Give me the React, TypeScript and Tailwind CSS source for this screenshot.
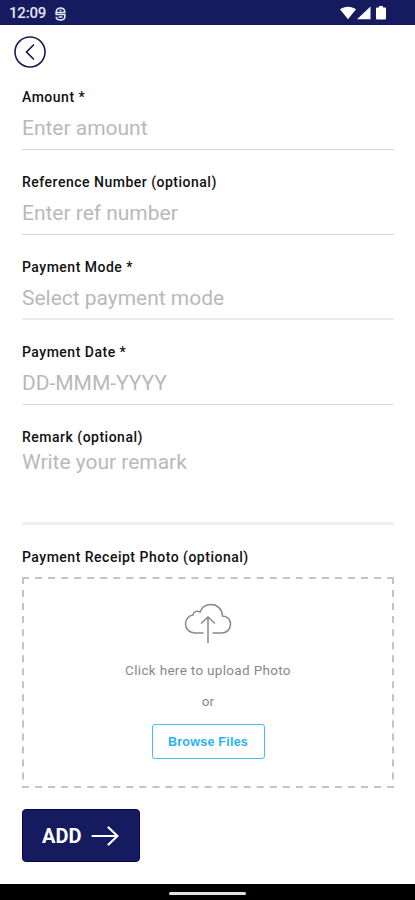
type FieldProps = { label: string; placeholder: string; line: string };

function Field({ label, placeholder, line }: FieldProps) {
  return (
    <div className="h-[85px]">
      <div className="h-4 text-[14px] leading-4 font-medium tracking-[0.5px] whitespace-nowrap text-[#111]">{label}</div>
      <div className={`flex h-[45px] items-center pt-1 text-[21px] tracking-[-0.02px] text-[#b9b9b9] ${line}`}>
        {placeholder}
      </div>
    </div>
  );
}

function StatusBar() {
  return (
    <div className="flex h-[25px] items-center justify-between bg-[#151b5e] pr-[26px] pl-[9px] text-[#e4e6f3]">
      <div className="flex items-center gap-[9px] pt-0.5">
        <span className="text-[15px] leading-[23px] font-medium tracking-[-0.2px]">12:09</span>
        <svg width="11" height="14" viewBox="0 0 11 14" fill="none" stroke="currentColor" strokeWidth="1.6">
          <path d="M1.200 5.500C1.200 2.500 3 1 5.500 1s4.300 1.500 4.300 4.500Z" />
          <path d="M1.200 5.500V7.500H9.800V9.700C9.800 12 8 13 5.500 13S1.200 12 1.200 9.700M3.500 10h4M5.500 2.500v2" />
        </svg>
      </div>
      <svg width="50" height="16" viewBox="0 0 50 16" fill="#fff">
        <path d="M1 4.300C5.500.8 12.500.8 17 4.300L9 14.300Z" />
        <path d="M31.500 1.500v12.800H18Z" />
        <path d="M38 2.500h2V1h4v1.500h2q1 0 1 1v10q0 1-1 1h-8q-1 0-1-1v-10q0-1 1-1Z" />
      </svg>
    </div>
  );
}

export default function App() {
  return (
    <div className="flex h-[900px] w-[415px] flex-col overflow-hidden bg-white font-[Roboto,sans-serif]">
      <StatusBar />
      <header className="flex h-[64px] shrink-0 items-start pt-[11px] pl-[14px]">
        <svg width="32" height="32" viewBox="0 0 32 32" fill="none" stroke="#1d1a55" strokeWidth="1.600">
          <circle cx="16" cy="16" r="15" />
          <path d="M19.500 9l-7 7 7 7" strokeLinecap="round" strokeWidth="1.700" />
        </svg>
      </header>
      <main className="flex flex-1 flex-col pr-[21px] pl-[22px]">
        <Field label="Amount *" placeholder="Enter amount" line="border-b border-[#d8d8d8]" />
        <Field label="Reference Number (optional)" placeholder="Enter ref number" line="border-b border-[#d8d8d8]" />
        <Field label="Payment Mode *" placeholder="Select payment mode" line="border-b-2 border-[#ececec]" />
        <Field label="Payment Date *" placeholder="DD-MMM-YYYY" line="border-b border-[#d8d8d8]" />
        <div className="h-[120px]">
          <div className="h-4 text-[14px] leading-4 font-medium tracking-[0.5px] text-[#111]">Remark (optional)</div>
          <div className="h-[80px] border-b-[3px] border-[#efefef] pt-[5px] text-[21px] leading-6 tracking-[-0.02px] text-[#b9b9b9]">
            Write your remark
          </div>
        </div>
        <div className="h-7 text-[14px] leading-4 font-medium tracking-[0.5px] text-[#111]">
          Payment Receipt Photo (optional)
        </div>
        <section className="relative flex h-[211px] flex-col items-center pt-[26px]">
          <svg className="absolute inset-0" width="372" height="211" fill="none" stroke="#c4c4c4" strokeWidth="2">
            <path d="M0 1H372M0 210H372M1 0V211M371 0V211" strokeDasharray="7 6.040" />
          </svg>
          <svg width="48" height="42" viewBox="0 0 48 42" fill="none" stroke="#858a90" strokeWidth="1.500">
            <path d="M19.500 30H11C5.500 30 1.500 26 1.500 21C1.500 16 5 12.500 9 12C9 9 13 7 16 9C18 4 22 1.500 27 1.500C33.500 1.500 38 6 38.500 13C43 13 46.500 16.500 46.500 21C46.500 26 43 30 38 30H28.500" />
            <path d="M24 40V14M17 20.500L24 14L31 20.500" />
          </svg>
          <div className="mt-[17px] text-[13.5px] leading-4 tracking-[0.32px] text-[#858a90]">Click here to upload Photo</div>
          <div className="mt-[15px] text-[13.5px] leading-4 text-[#858a90]">or</div>
          <button className="mt-[15px] h-[35px] w-[113px] rounded-[3px] border border-[#45bdf5] pt-px text-[12.5px] font-bold tracking-[0.25px] text-[#27b3f3] font-['Liberation_Sans',sans-serif]">
            Browse Files
          </button>
        </section>
        <button className="mt-[21px] flex h-[53px] w-[118px] items-center gap-[10px] rounded-[4px] border border-[#080653] bg-[#151b5e] pl-[19px] text-white">
          <span className="text-[20px] font-bold">ADD</span>
          <svg width="28" height="20" viewBox="0 0 28 20" fill="none" stroke="currentColor" strokeWidth="2.200" strokeLinecap="round">
            <path d="M1.500 10H26M17.500 1.500L26.500 10L17.500 18.500" />
          </svg>
        </button>
      </main>
      <footer className="flex h-4 items-center justify-center bg-black">
        <div className="mt-0.5 h-[3px] w-[77px] rounded-full bg-[#e5dfe5]" />
      </footer>
    </div>
  );
}
